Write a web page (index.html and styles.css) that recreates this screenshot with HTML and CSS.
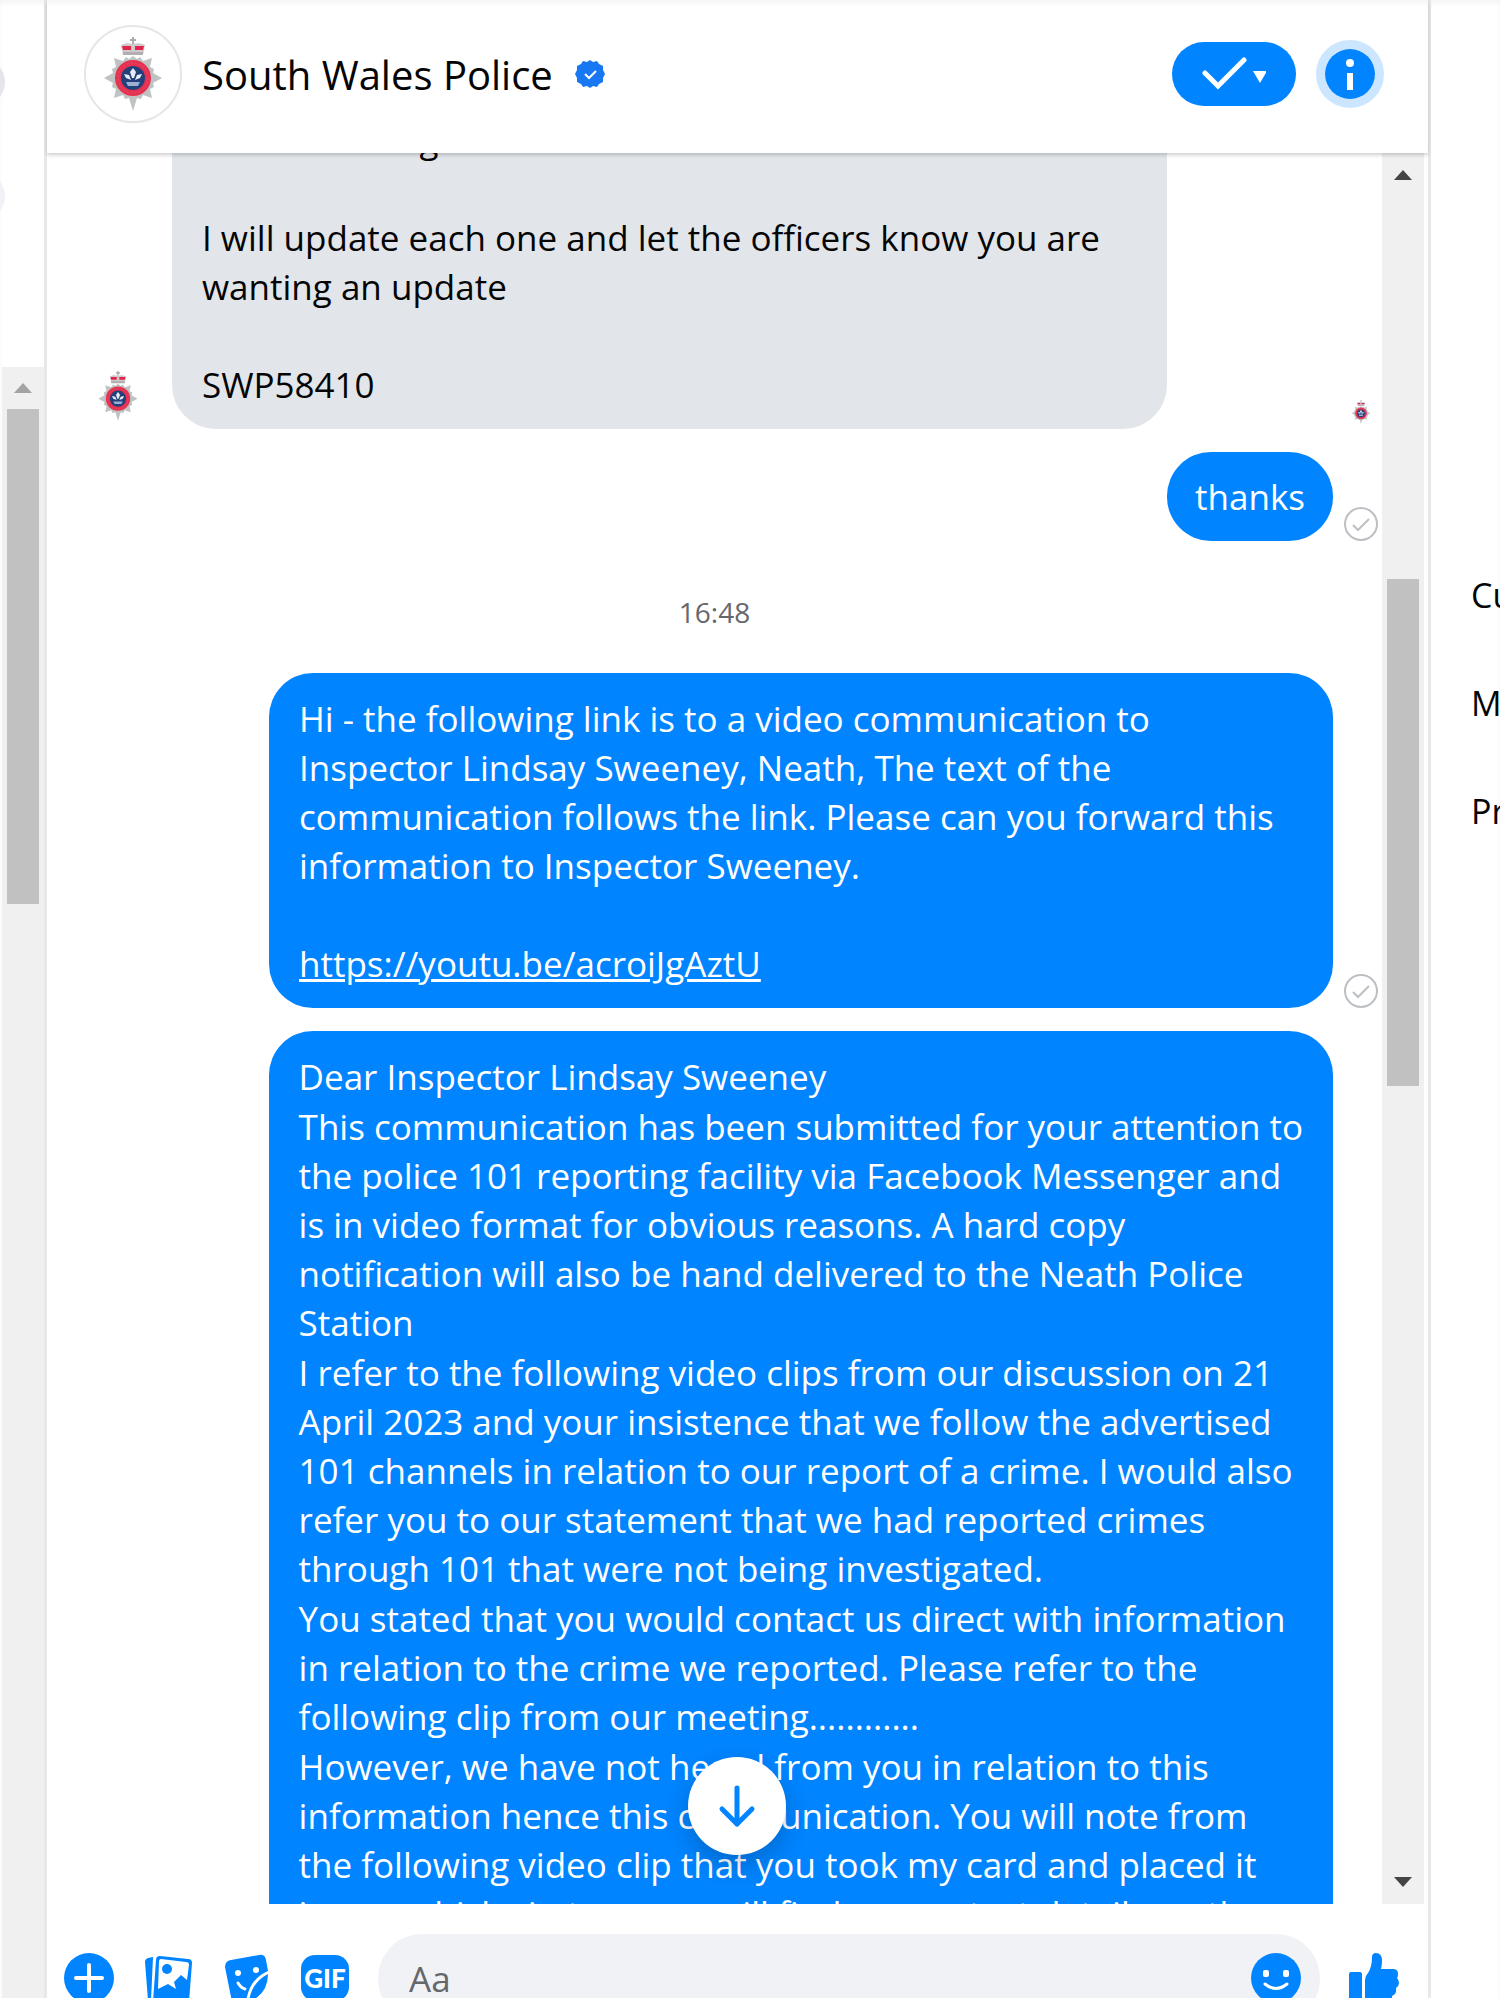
FILE: index.html
```html
<!DOCTYPE html>
<html lang="en">
<head>
  <meta charset="UTF-8" />
  <meta name="viewport" content="width=device-width, initial-scale=1.0"/>
  <title>Messenger</title>
  <link rel="stylesheet" href="styles.css">
</head>
<body>
  <!-- Shared crest -->
  <svg class="defs" width="0" height="0" aria-hidden="true">
    <symbol id="crest" viewBox="0 0 58 74">
      <path fill="#a9adaf" d="M28 0h2v2h2v2h-2v3h-2V4h-2V2h2V0z"/>
      <path fill="#cfc9cc" d="M17 8q5-3 12-1 7-2 12 1l-2 10H19z"/>
      <path fill="#e2234a" d="M18 9h9v4h-8zM31 9h9l-1 4h-8z"/>
      <path fill="#b3afb1" d="M19 15h20v3H19z"/>
      <path fill="#bfc3c4" d="M29 19l4 3 3-2 3 4 9-3-2 9 4 2-1 4 9 5-9 5 1 4-4 2 2 9-9-3-2 4-4-1-4 13-4-13-4 1-2-4-9 3 2-9-4-2 1-4-9-5 9-5-1-4 4-2-2-9 9 3 3-4 3 2z"/>
      <circle cx="29" cy="41" r="18" fill="#e8304f"/>
      <circle cx="29" cy="41" r="15" fill="none" stroke="#d4547a" stroke-dasharray="2 2"/>
      <circle cx="29" cy="41" r="12" fill="#24407c"/>
      <path fill="#e6edf5" d="M29 31l3 4-2 6h-2l-2-6zM20 37l5 1 2 5-5-2zM38 37l-5 1-2 5 5-2z"/>
      <path fill="#9db0cf" d="M22 45h14l-2 4H24z"/>
    </symbol>
    <symbol id="sent" viewBox="0 0 34 34">
      <circle cx="17" cy="17" r="16" fill="none" stroke="#bcc0c4" stroke-width="2"/>
      <path d="M9 18l5 5 11-11" fill="none" stroke="#bcc0c4" stroke-width="2"/>
    </symbol>
  </svg>

  <div class="app">
    <aside class="sidebar">
      <div class="peek"></div>
      <div class="peek light"></div>
      <div class="scrollbar side-scroll">
        <span class="arrow up faded"></span>
        <span class="thumb"></span>
      </div>
    </aside>

    <main class="chat">
      <header class="chat-header">
        <div class="avatar"><svg width="58" height="74"><use href="#crest"/></svg></div>
        <h1>South Wales Police</h1>
        <svg class="verified" width="30" height="30" viewBox="0 0 30 30" aria-label="Verified">
          <path fill="#1877f2" d="M15 1l3 2 4-1 2 3 4 2v4l2 4-2 4v4l-4 2-2 3-4-1-3 2-3-2-4 1-2-3-4-2v-4l-2-4 2-4V7l4-2 2-3 4 1z"/>
          <path d="M10 15l4 4 7-7" fill="none" stroke="#fff" stroke-width="2"/>
        </svg>
        <button class="done" aria-label="Mark as done">
          <svg width="64" height="36" viewBox="0 0 64 36">
            <path d="M3 17l13 13L42 4" fill="none" stroke="#fff" stroke-width="5" stroke-linecap="round"/>
            <path d="M51 15h14l-7 12z" fill="#fff"/>
          </svg>
        </button>
        <button class="info" aria-label="Conversation information">
          <svg width="50" height="50" viewBox="0 0 50 50">
            <circle cx="25" cy="25" r="25" fill="#0084ff"/>
            <circle cx="25" cy="14" r="4" fill="#fff"/>
            <path fill="#fff" d="M22 24h6v17h-6z"/>
          </svg>
        </button>
      </header>

      <div class="chat-body">
        <div class="messages">
          <div class="row received">
            <svg class="sender" width="40" height="50"><use href="#crest"/></svg>
            <div class="bubble">
              <p>Good morning</p>
              <p class="spaced">I will update each one and let the officers know you are<br>wanting an update</p>
              <p class="spaced">SWP58410</p>
            </div>
            <svg class="seen" width="20" height="24"><use href="#crest"/></svg>
          </div>

          <div class="row sent">
            <div class="bubble short"><p>thanks</p></div>
            <svg class="status" width="34" height="34"><use href="#sent"/></svg>
          </div>

          <time class="stamp">16:48</time>

          <div class="row sent">
            <div class="bubble">
              <p>Hi - the following link is to a video communication to<br>Inspector Lindsay Sweeney, Neath, The text of the<br>communication follows the link. Please can you forward this<br>information to Inspector Sweeney.</p>
              <p class="spaced"><a href="https://youtu.be/acroiJgAztU">https://youtu.be/acroiJgAztU</a></p>
            </div>
            <svg class="status" width="34" height="34"><use href="#sent"/></svg>
          </div>

          <div class="row sent">
            <div class="bubble letter">
              <p>Dear Inspector Lindsay Sweeney</p>
              <p>This communication has been submitted for your attention to<br>the police 101 reporting facility via Facebook Messenger and<br>is in video format for obvious reasons. A hard copy<br>notification will also be hand delivered to the Neath Police<br>Station</p>
              <p>I refer to the following video clips from our discussion on 21<br>April 2023 and your insistence that we follow the advertised<br>101 channels in relation to our report of a crime. I would also<br>refer you to our statement that we had reported crimes<br>through 101 that were not being investigated.</p>
              <p>You stated that you would contact us direct with information<br>in relation to the crime we reported. Please refer to the<br>following clip from our meeting............</p>
              <p>However, we have not heard from you in relation to this<br>information hence this communication. You will note from<br>the following video clip that you took my card and placed it<br>in my vehicle, in turn you will find my contact details on the</p>
            </div>
            <span class="status"></span>
          </div>
        </div>

        <div class="scrollbar chat-scroll">
          <span class="arrow up"></span>
          <span class="thumb"></span>
          <span class="arrow down"></span>
        </div>

        <button class="jump" aria-label="Scroll to latest message">
          <svg width="40" height="44" viewBox="0 0 40 44" fill="none" stroke="#0084ff" stroke-width="5" stroke-linecap="round" stroke-linejoin="round">
            <path d="M20 4v36M5 25l15 15 15-15"/>
          </svg>
        </button>
      </div>

      <footer class="composer">
        <button aria-label="More actions">
          <svg width="50" height="50" viewBox="0 0 50 50">
            <circle cx="25" cy="25" r="25" fill="#0084ff"/>
            <path d="M25 12v26M12 25h26" stroke="#fff" stroke-width="4" stroke-linecap="round"/>
          </svg>
        </button>
        <button aria-label="Attach a photo">
          <svg width="50" height="50" viewBox="0 0 50 50">
            <path fill="#0084ff" d="M2 9q0-3 3-4l5-1-2 44-3-1z"/>
            <path fill="#0084ff" d="M17 3l28 3q4 0 4 4l-3 39H10l3-42q0-4 4-4z"/>
            <path fill="#fff" d="M18 6l25 3q3 0 3 3l-2 15-6-5-7 7 2 7-8-5-10 5 1-27q0-3 2-3z"/>
            <circle cx="24" cy="16" r="5" fill="#0084ff"/>
          </svg>
        </button>
        <button aria-label="Choose a sticker">
          <svg width="50" height="50" viewBox="0 0 50 50">
            <path fill="#0084ff" d="M9 7l28-5q6-1 7 5l2 11q-19 8-22 31l-9 1q-5-1-6-6L3 14q0-6 6-7z"/>
            <path fill="#0084ff" d="M46 21q0 20-19 28 2-19 19-28z"/>
            <circle cx="16" cy="20" r="3" fill="#fff"/>
            <circle cx="34" cy="17" r="3" fill="#fff"/>
            <path d="M16 30q3 5 7 6" fill="none" stroke="#fff" stroke-width="3" stroke-linecap="round"/>
          </svg>
        </button>
        <button class="gif" aria-label="Choose a GIF">GIF</button>
        <div class="field">
          <input type="text" placeholder="Aa" aria-label="Message">
          <button aria-label="Choose an emoji">
            <svg width="50" height="50" viewBox="0 0 50 50">
              <circle cx="25" cy="25" r="25" fill="#0084ff"/>
              <rect x="12" y="17" width="6" height="7" rx="2" fill="#fff"/>
              <rect x="32" y="17" width="6" height="7" rx="2" fill="#fff"/>
              <path d="M14 31q11 9 22 0" fill="none" stroke="#fff" stroke-width="3" stroke-linecap="round"/>
            </svg>
          </button>
        </div>
        <button aria-label="Send a like">
          <svg width="50" height="50" viewBox="0 0 50 50" fill="#0084ff">
            <path d="M2 19h9q2 0 2 2v29H0V21q0-2 2-2z"/>
            <path d="M16 27q0-4 3-7 4-6 4-16 0-4 4-4 6 0 6 8 0 4-1 8h12q5 0 5 5 0 3-1 4 2 2 2 5t-3 5q1 6-4 8 0 7-7 7H22q-6 0-6-5z"/>
          </svg>
        </button>
      </footer>
    </main>

    <aside class="details">
      <ul>
        <li>Customise chat</li>
        <li>Media &amp; files</li>
        <li>Privacy &amp; support</li>
      </ul>
    </aside>
  </div>
</body>
</html>
```
FILE: styles.css
```css
:root {
  --blue: #0084ff;
  --grey-bubble: #e2e5ea;
  --track: #f0f0f0;
  --thumb: #c1c1c1;
  --line: #e8e8e8;
}

* {
  box-sizing: border-box;
}

body {
  margin: 0;
  background: #fff;
  color: #050505;
  font-family: "Open Sans", "Noto Sans", sans-serif;
  font-size: 35px;
  line-height: 49px;
}

h1, p, ul {
  margin: 0;
  padding: 0;
}

button {
  padding: 0;
  border: none;
  background: none;
  font-family: inherit;
  cursor: pointer;
}

svg {
  display: block;
  flex: none;
}

.defs {
  position: absolute;
}

.app {
  display: grid;
  grid-template-columns: 47px minmax(0, 1fr) 72px;
  height: 100vh;
  overflow: hidden;
  box-shadow: inset 0 4px 4px #f6f6f6;
}

/* Left column */
.sidebar {
  display: flex;
  flex-direction: column;
  border-right: 3px solid var(--line);
  overflow: hidden;
}

.peek {
  flex: none;
  width: 48px;
  height: 48px;
  margin: 58px 0 66px -43px;
  border-radius: 50%;
  background: #e4e6eb;
}

.peek.light {
  margin-top: 0;
  margin-bottom: 147px;
  background: #f0f2f5;
}

.scrollbar {
  display: flex;
  flex-direction: column;
  align-items: center;
  flex: none;
  width: 42px;
  background: var(--track);
}

.side-scroll {
  flex: 1;
  margin-left: 2px;
}

.thumb {
  width: 32px;
  background: var(--thumb);
}

.side-scroll .thumb {
  height: 495px;
}

.arrow {
  display: flex;
  align-items: center;
  justify-content: center;
  height: 42px;
}

.arrow::before {
  content: "";
  border: 9px solid transparent;
  border-top-width: 0;
  border-bottom: 10px solid #444;
}

.arrow.faded::before {
  border-bottom-color: #a3a3a3;
}

.arrow.down::before {
  border-top: 10px solid #444;
  border-bottom: 0;
}

/* Conversation */
.chat {
  display: flex;
  flex-direction: column;
  min-width: 0;
  height: 100vh;
}

.chat-header {
  display: flex;
  align-items: center;
  flex: none;
  height: 153px;
  padding: 0 44px 5px 37px;
  box-shadow: 0 2px 4px rgba(0, 0, 0, 0.2);
  z-index: 1;
}

.avatar {
  display: flex;
  align-items: center;
  justify-content: center;
  width: 98px;
  height: 98px;
  border: 2px solid #e6e6e6;
  border-radius: 50%;
}

h1 {
  margin: 0 22px 0 20px;
  font-size: 40px;
  font-weight: 500;
}

.done {
  display: flex;
  align-items: center;
  justify-content: center;
  width: 124px;
  height: 64px;
  margin-left: auto;
  border-radius: 32px;
  background: var(--blue);
}

.info {
  margin-left: 20px;
  border: 9px solid #cce6ff;
  border-radius: 50%;
}

.chat-body {
  display: flex;
  flex: 1;
  min-height: 0;
  position: relative;
  overflow: hidden;
}

.messages {
  display: flex;
  flex-direction: column;
  flex: 1;
  gap: 23px;
  min-width: 0;
  margin-top: -59px;
}

.row {
  display: flex;
  align-items: flex-end;
  flex: none;
  padding: 0 4px 0 5px;
}

.sent {
  justify-content: flex-end;
}

.bubble {
  flex: 0 1 1064px;
  padding: 21px 30px 20px;
  border-radius: 44px;
  background: var(--blue);
  color: #fff;
  white-space: nowrap;
}

.bubble.short {
  flex: none;
  padding: 20px 28px;
}

.received .bubble {
  flex-basis: 995px;
  background: var(--grey-bubble);
  color: #050505;
}

.bubble a {
  color: inherit;
}

.spaced {
  margin-top: 49px;
}

.letter p + p {
  margin-top: 1px;
}

.sender {
  margin: 0 34px 8px 46px;
}

.seen {
  margin: 0 7px 5px auto;
}

.status {
  width: 34px;
  margin-left: 11px;
}

.stamp {
  align-self: center;
  margin: 24px 0 13px;
  color: #65676b;
  font-size: 28px;
  font-weight: 500;
}

.chat-scroll {
  margin-right: 4px;
}

.chat-scroll .arrow {
  height: 44px;
}

.chat-scroll .thumb {
  height: 507px;
  margin: 382px 0 auto;
}

.jump {
  display: flex;
  align-items: center;
  justify-content: center;
  position: absolute;
  left: 50%;
  bottom: 49px;
  width: 98px;
  height: 98px;
  margin-left: -50px;
  border-radius: 50%;
  background: #fff;
  box-shadow: 0 10px 24px rgba(0, 0, 0, 0.2);
}

/* Message box */
.composer {
  display: flex;
  align-items: center;
  flex: none;
  gap: 29px;
  height: 94px;
  padding: 54px 29px 0 17px;
}

.composer > button {
  flex: none;
}

.composer .gif {
  width: 48px;
  height: 46px;
  border-radius: 14px;
  background: var(--blue);
  color: #fff;
  font-family: Lato, sans-serif;
  font-size: 26px;
  font-weight: 900;
  line-height: 46px;
}

.field {
  display: flex;
  align-items: center;
  flex: 1;
  min-width: 0;
  height: 89px;
  padding: 0 19px 0 29px;
  border-radius: 44px;
  background: #f0f2f5;
}

.field input {
  flex: 1;
  min-width: 0;
  border: none;
  outline: none;
  background: none;
  color: #050505;
  font: inherit;
}

.field input::placeholder {
  color: #65676b;
}

/* Right column */
.details {
  padding: 571px 0 0 40px;
  border-left: 3px solid var(--line);
  overflow: hidden;
}

.details ul {
  display: flex;
  flex-direction: column;
  gap: 59px;
  list-style: none;
  white-space: nowrap;
}

.details li {
  font-size: 34px;
  font-weight: 500;
}
```
